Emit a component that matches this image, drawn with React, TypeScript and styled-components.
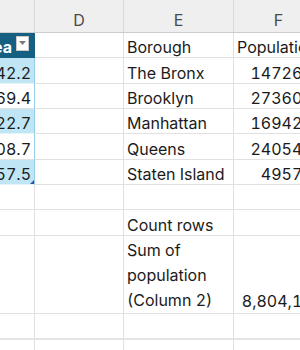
import React from "react";
import styled, { createGlobalStyle, css } from "styled-components";

const GlobalStyle = createGlobalStyle`
  html, body { margin: 0; padding: 0; background: #ffffff; overflow: hidden; }
  body { font-family: Inter, "Liberation Sans", sans-serif; }
`;

const COLS = "35px 89px 110px 93px";
const GRID = "#e1e1e1";

const Sheet = styled.div`
  width: 300px;
  height: 350px;
  overflow: hidden;
  display: flex;
  flex-direction: column;
`;

const HeaderRow = styled.div`
  display: grid;
  grid-template-columns: ${COLS};
  height: 33px;
  box-sizing: border-box;
  background: #efefef;
  border-bottom: 1px solid #cdcdcd;
  flex: none;
`;

const ColLetter = styled.div<{ $shift?: number }>`
  display: flex;
  align-items: center;
  justify-content: center;
  padding-top: 7px;
  padding-right: ${(p) => p.$shift ?? 0}px;
  box-sizing: border-box;
  font-size: 16px;
  color: #4a4a4a;
  border-right: 1px solid #dadada;
`;

const Row = styled.div<{ $h: number }>`
  display: grid;
  grid-template-columns: ${COLS};
  height: ${(p) => p.$h}px;
  flex: none;
  box-sizing: border-box;
`;

type Tone = "plain" | "head" | "band" | "white";

const Cell = styled.div<{
  $align?: "left" | "right";
  $tone?: Tone;
  $thick?: boolean;
  $wrap?: boolean;
  $lift?: number;
}>`
  position: relative;
  display: flex;
  align-items: flex-end;
  justify-content: ${(p) => (p.$align === "right" ? "flex-end" : "flex-start")};
  box-sizing: border-box;
  overflow: hidden;
  white-space: nowrap;
  font-size: 16px;
  line-height: 20px;
  color: #1b1b1b;
  padding: 0 3px ${(p) => p.$lift ?? 0}px 3px;
  border-right: 1px solid ${GRID};
  border-bottom: ${(p) => (p.$thick ? "2px solid #e4e4e4" : `1px solid ${GRID}`)};
  font-variant-numeric: tabular-nums;
  ${(p) =>
    p.$wrap &&
    css`
      white-space: normal;
      line-height: 25px;
    `}
  ${(p) =>
    p.$tone === "head" &&
    css`
      background: #156082;
      color: #ffffff;
      font-weight: 700;
      align-items: center;
      padding: 0 5px 0 0;
      border-right: 1px solid #156082;
      border-bottom: 1px solid #156082;
    `}
  ${(p) =>
    p.$tone === "band" &&
    css`
      background: #c0e6f5;
      border-right: 1px solid #94cde8;
      border-bottom: 1px solid #e6f3fa;
    `}
  ${(p) =>
    p.$tone === "white" &&
    css`
      background: #ffffff;
      border-right: 1px solid #94cde8;
    `}
`;

const HeadText = styled.span`
  margin-right: 4px;
  padding-top: 4px;
`;

const FilterButton = styled.span`
  flex: none;
  width: 13px;
  height: 15px;
  margin-top: -4px;
  box-sizing: border-box;
  background: #ffffff;
  border: 1px solid #c8c8c8;
  display: flex;
  align-items: center;
  justify-content: center;
`;

const ResizeHandle = styled.span`
  position: absolute;
  right: 0;
  bottom: 0;
  width: 0;
  height: 0;
  border-left: 4px solid transparent;
  border-bottom: 4px solid #3b4aa8;
`;

const RH = 25.33;

type RowData = { c?: string; tone?: Tone; e?: string; f?: string; fAlign?: "left" | "right"; handle?: boolean };

const rows: RowData[] = [
  { c: "Area", tone: "head", e: "Borough", f: "Population", fAlign: "left" },
  { c: "42.2", tone: "band", e: "The Bronx", f: "1472654" },
  { c: "69.4", tone: "white", e: "Brooklyn", f: "2736074" },
  { c: "22.7", tone: "band", e: "Manhattan", f: "1694251" },
  { c: "108.7", tone: "white", e: "Queens", f: "2405464" },
  { c: "57.5", tone: "band", e: "Staten Island", f: "495747", handle: true },
  {},
  { e: "Count rows" },
];

export default function App() {
  return (
    <>
      <GlobalStyle />
      <Sheet>
        <HeaderRow>
          <ColLetter />
          <ColLetter>D</ColLetter>
          <ColLetter>E</ColLetter>
          <ColLetter $shift={3}>F</ColLetter>
        </HeaderRow>
        {rows.map((r, i) => (
          <Row key={i} $h={RH}>
            {r.tone === "head" ? (
              <Cell $align="right" $tone="head">
                <HeadText>{r.c}</HeadText>
                <FilterButton>
                  <svg width="7" height="4" viewBox="0 0 7 4">
                    <path d="M0 0 H7 L3.5 4 Z" fill="#7a7a7a" />
                  </svg>
                </FilterButton>
              </Cell>
            ) : (
              <Cell $align="right" $tone={r.tone ?? "plain"}>
                {r.c}
                {r.handle && <ResizeHandle />}
              </Cell>
            )}
            <Cell />
            <Cell>{r.e}</Cell>
            <Cell $align={r.fAlign ?? "right"}>{r.f}</Cell>
          </Row>
        ))}
        <Row $h={78.3}>
          <Cell />
          <Cell />
          <Cell $wrap>Sum of population (Column 2)</Cell>
          <Cell $align="right" $lift={2}>8,804,190</Cell>
        </Row>
        <Row $h={RH + 1}>
          <Cell $thick />
          <Cell $thick />
          <Cell $thick />
          <Cell $thick />
        </Row>
        <Row $h={RH}>
          <Cell />
          <Cell />
          <Cell />
          <Cell />
        </Row>
      </Sheet>
    </>
  );
}
